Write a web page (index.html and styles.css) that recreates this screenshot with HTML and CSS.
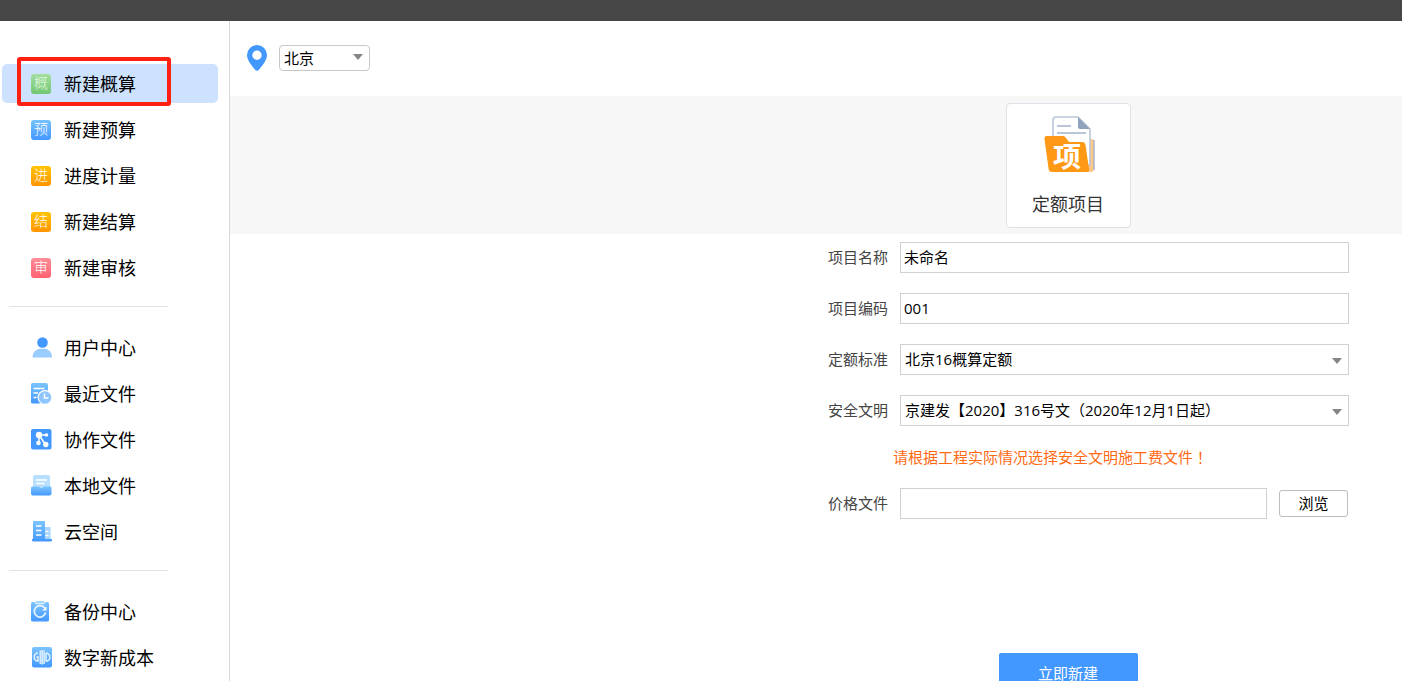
FILE: index.html
```html
<!DOCTYPE html>
<html lang="zh-CN">
<head>
<meta charset="utf-8">
<title>新建概算</title>
<link rel="stylesheet" href="styles.css">
</head>
<body>
<svg class="defs" aria-hidden="true">
  <defs>
    <linearGradient id="blue" x1="0" y1="0" x2="0" y2="1"><stop offset="0" stop-color="#7cc4ff"/><stop offset="1" stop-color="#4398ff"/></linearGradient>
  </defs>
</svg>
<header class="titlebar"></header>
<div class="shell">
  <nav class="sidebar">
    <ul class="menu">
      <li class="marked"><a class="item active" href="#"><span class="badge green">概</span>新建概算</a></li>
      <li><a class="item" href="#"><span class="badge blue">预</span>新建预算</a></li>
      <li><a class="item" href="#"><span class="badge orange">进</span>进度计量</a></li>
      <li><a class="item" href="#"><span class="badge orange">结</span>新建结算</a></li>
      <li><a class="item" href="#"><span class="badge red">审</span>新建审核</a></li>
    </ul>
    <hr class="divider">
    <ul class="menu">
      <li><a class="item" href="#"><svg class="icon" viewBox="0 0 21 21"><path d="M1.500 20.500C1.500 14.500 6 11.500 11.500 11.500S21 14.500 21 20.500Z" fill="#9accff"/><circle cx="11.500" cy="5.500" r="6" fill="#fff"/><circle cx="11.500" cy="5.500" r="5.300" fill="#4398ff"/></svg>用户中心</a></li>
      <li><a class="item" href="#"><svg class="icon" viewBox="0 0 21 21"><path d="M1.500 0H15a2 2 0 0 1 2 2V20.500H1.500A1.500 1.500 0 0 1 0 19V1.500A1.500 1.500 0 0 1 1.500 0Z" fill="url(#blue)"/><path d="M2.500 5.500H13.500M2.500 10H7M2.500 14.500H5.500" stroke="#fff" stroke-width="1.500"/><circle cx="14" cy="14.500" r="7.500" fill="#fff"/><circle cx="14" cy="14.500" r="6.300" fill="#8fc6ff"/><path d="M13.500 10.500V15H17.500" fill="none" stroke="#fff" stroke-width="1.500"/></svg>最近文件</a></li>
      <li><a class="item" href="#"><svg class="icon" viewBox="0 0 21 21"><rect width="20.500" height="20.500" rx="2" fill="#4398ff"/><path d="M8 6H15.500M8 6V14M8 6L14.500 15.500" stroke="#fff" stroke-width="1.500"/><circle cx="8" cy="6" r="3.200" fill="#fff"/><circle cx="15.500" cy="6" r="1.800" fill="#fff"/><circle cx="7.500" cy="14" r="2.300" fill="#fff"/><circle cx="14.800" cy="15.500" r="2.700" fill="#fff"/></svg>协作文件</a></li>
      <li><a class="item" href="#"><svg class="icon" viewBox="0 0 21 21"><path d="M4 0H17a2 2 0 0 1 2 2V14H2V2A2 2 0 0 1 4 0Z" fill="#b7deff"/><path d="M5 5H16M5 8.500H13.500" stroke="#fff" stroke-width="1.500"/><path d="M1 11.500H8L10.500 13.500L13 11.500H20L20.500 12.500V18.500A2 2 0 0 1 18.500 20.500H2A2 2 0 0 1 0 18.500V12.500Z" fill="url(#blue)"/></svg>本地文件</a></li>
      <li><a class="item" href="#"><svg class="icon" viewBox="0 0 21 21"><path d="M13 6H18.500a1 1 0 0 1 1 1V19H13Z" fill="#a8d5ff"/><path d="M3 0H13a1 1 0 0 1 1 1V18H21V19a1.500 1.500 0 0 1-1.500 1.500H2.500A1.500 1.500 0 0 1 1 19V18H2V1A1 1 0 0 1 3 0Z" fill="url(#blue)"/><path d="M5 5H10.500M5 9.500H10.500M5 14H10.500M14.500 10.500H17.500M14.500 14.500H17.500" stroke="#fff" stroke-width="1.500"/></svg>云空间</a></li>
    </ul>
    <hr class="divider">
    <ul class="menu">
      <li><a class="item" href="#"><svg class="icon" viewBox="0 0 21 21"><rect y="1" width="18" height="19.500" rx="1.500" fill="url(#blue)"/><rect x="4" y="-.5" width="10" height="3.300" rx="1.600" fill="#a8d8ff" stroke="#fff" stroke-width=".8"/><path d="M13.800 7.200A5.700 5.700 0 1 0 14.600 11.500" fill="none" stroke="#e6f4ff" stroke-width="1.700"/><path d="M15.500 5.500V9.500H11.200Z" fill="#fff"/></svg>备份中心</a></li>
      <li><a class="item" href="#"><svg class="icon" viewBox="0 0 21 21"><rect x="1" width="20" height="20.500" rx="2" fill="url(#blue)"/><path d="M7 6.300H5.500L3.300 8.500V12L5.500 14H7V10H5.300M15 6.300H16.500L18.700 8.500V12L16.500 14H15V6" fill="none" stroke="#e2f2ff" stroke-width="1.500"/><path d="M9.300 3.500V17M11.200 3V17.500M13.100 3.500V17" stroke="#d8edff" stroke-width="1.600"/></svg>数字新成本</a></li>
    </ul>
  </nav>
  <main class="main">
    <div class="location">
      <svg class="pin" viewBox="0 0 20 26" aria-hidden="true"><path fill-rule="evenodd" d="M10 0A10 10 0 0 1 20 10C20 15 15.500 20.500 12 24.700Q10 26.600 8 24.700C4.500 20.500 0 15 0 10A10 10 0 0 1 10 0ZM10 5.500A4.700 4.700 0 1 0 10 14.900A4.700 4.700 0 1 0 10 5.500Z" fill="#4398ff"/></svg>
      <span class="select small"><select aria-label="地区"><option>北京</option></select></span>
    </div>
    <div class="band">
      <div class="column">
        <button class="card" type="button">
          <svg class="folder" viewBox="0 0 52 58" aria-hidden="true">
            <path d="M44 23H47Q50 23 50 26V53Q50 56 47 56H40Z" fill="#ffc785"/><path d="M50 24V54" stroke="#a8b4c4" stroke-width="1.500"/>
            <path d="M12 1H34L46 13V49H9V4Q9 1 12 1Z" fill="#fff" stroke="#b9c6d8" stroke-width="1.600"/>
            <path d="M34 1L46 13H36Q34 13 34 11Z" fill="#8fa3bd"/>
            <path d="M13 10H27M13 17H42" stroke="#b9c6d8" stroke-width="2"/>
            <path d="M3 20H19Q21 20 22 22L25 26H38Q41 26 41.500 29L45 53Q45.500 56 42 56H8Q5 56 4.600 53L.5 23Q.2 20 3 20Z" fill="#ff9815"/>
            <text x="23" y="51" text-anchor="middle" class="folder-text">项</text>
          </svg>
          <span>定额项目</span>
        </button>
      </div>
    </div>
    <form class="column form">
      <div class="fields">
        <label for="name">项目名称</label><input id="name" type="text" value="未命名">
        <label for="code">项目编码</label><input id="code" type="text" value="001">
        <label for="quota">定额标准</label><span class="select"><select id="quota"><option>北京16概算定额</option></select></span>
        <label for="safety">安全文明</label><span class="select"><select id="safety"><option>京建发【2020】316号文（2020年12月1日起）</option></select></span>
        <p class="notice">请根据工程实际情况选择安全文明施工费文件<span class="mark" lang="zh-TW">！</span></p>
        <label for="price">价格文件</label><div class="file"><input id="price" type="text"><button class="browse" type="button">浏览</button></div>
      </div>
      <button class="submit" type="button">立即新建</button>
    </form>
  </main>
</div>
</body>
</html>
```
FILE: styles.css
```css
* { box-sizing: border-box; }
body {
  margin: 0;
  height: 100vh;
  overflow: hidden;
  display: flex;
  flex-direction: column;
  background: #fff;
  color: #000;
  font: 15px/20px "Open Sans", "Noto Sans CJK SC", sans-serif;
}
button, input, select { font: inherit; color: inherit; }
.defs { position: absolute; width: 0; height: 0; }
.titlebar { flex: none; height: 21px; background: #464646; }
.shell { flex: 1; display: flex; min-height: 0; }

.sidebar {
  flex: none;
  width: 230px;
  padding: 43px 11px 0 2px;
  border-right: 1px solid #d9d9d9;
  overflow: hidden;
}
.menu {
  list-style: none;
  margin: 0;
  padding: 0;
  display: flex;
  flex-direction: column;
  gap: 7px;
}
.item {
  display: flex;
  align-items: center;
  gap: 12px;
  height: 39px;
  padding-left: 29px;
  border-radius: 5px;
  color: #000;
  font-size: 18px;
  line-height: 24px;
  text-decoration: none;
}
.active { background: #cce2ff; }
.marked { position: relative; }
.marked::after {
  content: "";
  position: absolute;
  inset: -7px 47px -3px 15px;
  border: 4px solid #ff2012;
  border-radius: 3px;
}
.icon { flex: none; width: 21px; height: 21px; }
.badge {
  flex: none;
  width: 20px;
  height: 20px;
  margin-right: 1px;
  border-radius: 3px;
  color: #fff;
  font-size: 14px;
  font-weight: 300;
  line-height: 18px;
  text-align: center;
}
.green { background: linear-gradient(#a3dfa0, #72c673); color: #e0f8df; }
.blue { background: linear-gradient(#76c2ff, #4398ff); }
.orange { background: linear-gradient(#ffc400, #ff9500); }
.red { background: linear-gradient(#ff8d98, #ff6170); }
.divider { margin: 19px 50px 21px 7px; border: 0; border-top: 1px solid #e2e2e2; }

.main { flex: 1; min-width: 0; }
.location { display: flex; align-items: center; gap: 12px; height: 75px; padding: 0 0 2px 17px; }
.pin { width: 20px; height: 26px; }
.select { position: relative; display: flex; }
.select::after {
  content: "";
  position: absolute;
  right: 7px;
  top: 50%;
  margin-top: -2px;
  border: 5px solid transparent;
  border-top: 6px solid #858585;
  border-bottom: 0;
  pointer-events: none;
}
select, input {
  width: 100%;
  height: 31px;
  padding: 0 4px 2px;
  border: 1px solid #d0d0d0;
  border-radius: 0;
  background: #fff;
  appearance: none;
  outline: none;
}
input { padding-left: 3px; }
.small { width: 91px; }
.small select { height: 26px; padding-bottom: 0; border-color: #c8c8c8; border-radius: 4px; }
.small::after { margin-top: -4px; }

.band { padding: 7px 0 6px; background: #f7f7f7; }
.column {
  width: min(100%, 668px);
  margin-left: auto;
  display: flex;
  flex-direction: column;
  align-items: center;
}
.card {
  display: flex;
  flex-direction: column;
  align-items: center;
  gap: 20px;
  width: 125px;
  height: 125px;
  padding: 12px 0 0;
  border: 1px solid #dce2e7;
  border-radius: 4px;
  background: #fff;
  color: #333;
  font-size: 18px;
}
.folder { width: 52px; height: 58px; margin-left: 4px; }
.folder-text { font: 700 28px "Noto Sans CJK SC", sans-serif; fill: #fff; }

.form { padding-top: 8px; }
.fields {
  align-self: stretch;
  display: grid;
  grid-template-columns: 60px 1fr;
  align-items: center;
  gap: 20px 12px;
  padding: 0 53px 0 94px;
}
.fields label { padding-bottom: 2px; color: #444; white-space: nowrap; }
.notice { grid-column: 1 / -1; margin: 0; padding-left: 65px; line-height: 22px; color: #ff6a13; }
.mark { font-family: "Noto Sans CJK TC", sans-serif; }
.file { display: flex; align-items: center; gap: 12px; padding-right: 1px; }
.file input { flex: 1; min-width: 0; }
.browse {
  width: 69px;
  height: 27px;
  padding: 0 0 2px;
  border: 1px solid #bdbdbd;
  border-radius: 3px;
  background: #fff;
}
.submit {
  width: 139px;
  height: 40px;
  margin-top: 134px;
  border: 0;
  border-radius: 2px;
  background: #4398ff;
  color: #fff;
}
```
